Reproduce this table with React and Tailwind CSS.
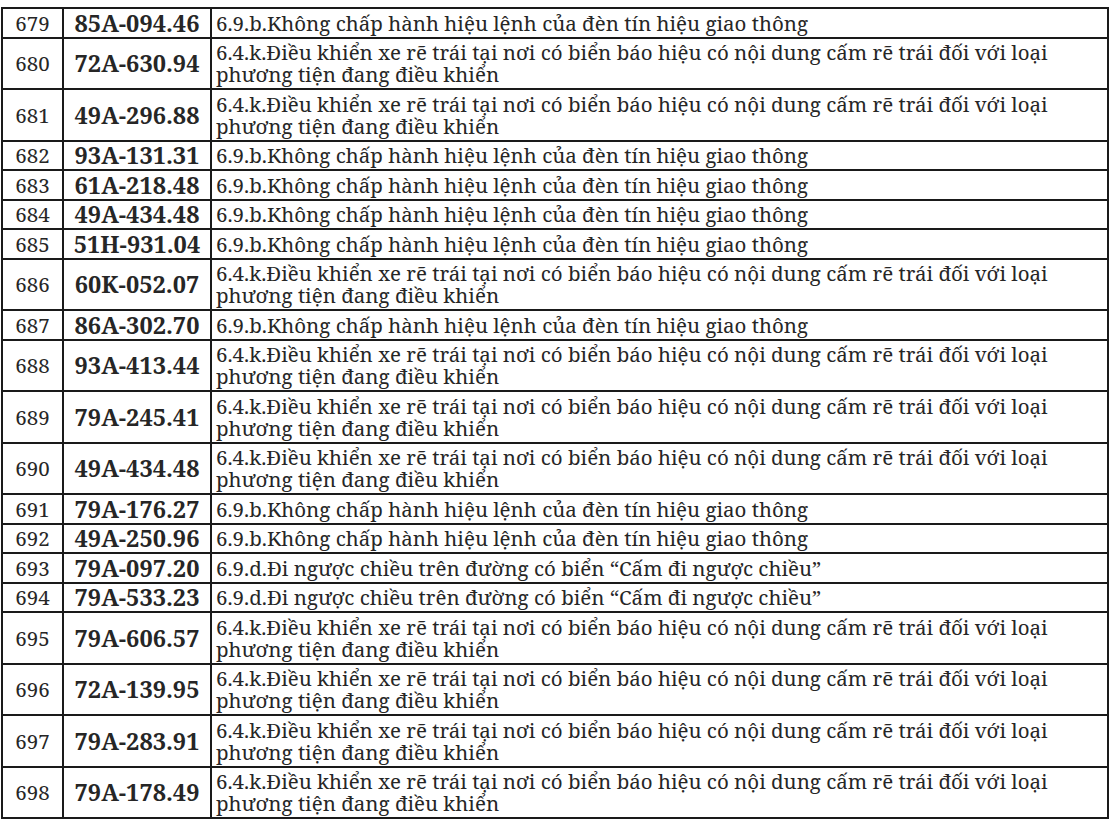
import React from "react";

const A = "6.9.b.Không chấp hành hiệu lệnh của đèn tín hiệu giao thông";
const B = "6.4.k.Điều khiển xe rẽ trái tại nơi có biển báo hiệu có nội dung cấm rẽ trái đối với loại phương tiện đang điều khiển";
const C = "6.9.d.Đi ngược chiều trên đường có biển “Cấm đi ngược chiều”";

const rows = [
    ["679", "85A-094.46", A],
    ["680", "72A-630.94", B],
    ["681", "49A-296.88", B],
    ["682", "93A-131.31", A],
    ["683", "61A-218.48", A],
    ["684", "49A-434.48", A],
    ["685", "51H-931.04", A],
    ["686", "60K-052.07", B],
    ["687", "86A-302.70", A],
    ["688", "93A-413.44", B],
    ["689", "79A-245.41", B],
    ["690", "49A-434.48", B],
    ["691", "79A-176.27", A],
    ["692", "49A-250.96", A],
    ["693", "79A-097.20", C],
    ["694", "79A-533.23", C],
    ["695", "79A-606.57", B],
    ["696", "72A-139.95", B],
    ["697", "79A-283.91", B],
    ["698", "79A-178.49", B],
];

function App() {
    return (
        <div className="bg-white w-[1117px] h-[825px] overflow-hidden pt-[7px] pl-px">
            <table
                className="border-collapse table-fixed w-[1108px] text-[#262626] font-['Noto_Serif','DejaVu_Serif',serif]">
                <colgroup>
                    <col className="w-[61px]"/>
                    <col className="w-[148px]"/>
                    <col/>
                </colgroup>
                <tbody>
                {rows.map(([n, plate, text]) => (
                    <tr key={n}>
                        <td className="border-2 border-[#1a1a1a] text-center align-middle text-[20.5px] leading-[22px] py-[2.75px]">
                            {n}
                        </td>
                        <td className="border-2 border-[#1a1a1a] text-center align-middle font-bold text-[23.5px] leading-[22px] py-[2.75px] whitespace-nowrap">
                            {plate}
                        </td>
                        <td className="border-2 border-[#1a1a1a] text-left align-middle text-[20.5px] leading-[22px] pl-[4px] pr-1 py-[2.75px]">
                            {text}
                        </td>
                    </tr>
                ))}
                </tbody>
            </table>
        </div>
    );
}

export default App;
